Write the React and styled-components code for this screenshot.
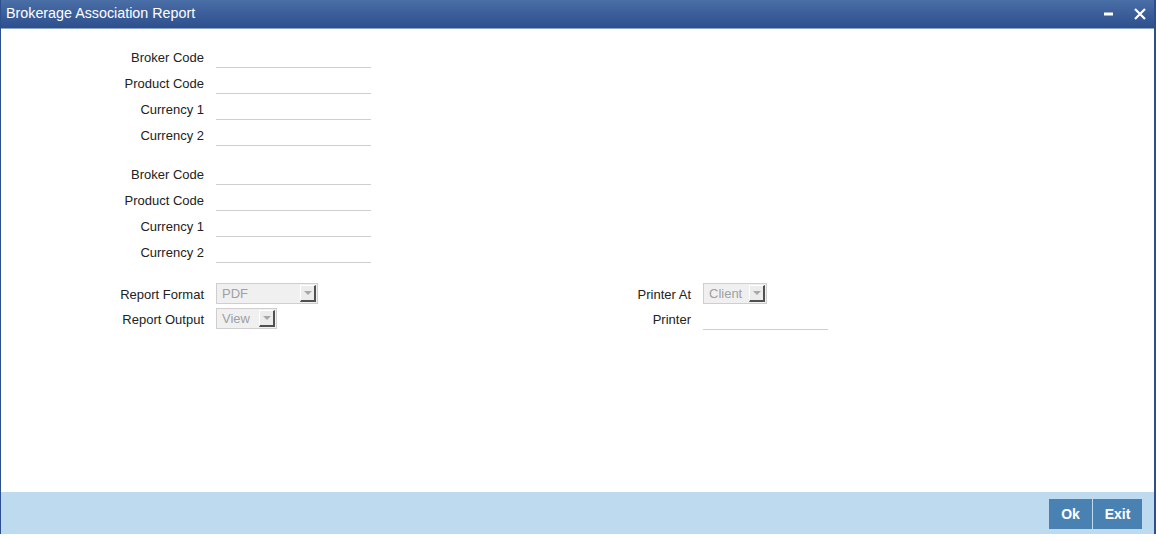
import React from 'react';
import styled, { createGlobalStyle } from 'styled-components';

const GlobalStyle = createGlobalStyle`
  html, body {
    margin: 0;
    padding: 0;
    background: #fff;
    font-family: "Liberation Sans", Arial, sans-serif;
  }
`;

const Window = styled.div`
  width: 1156px;
  height: 534px;
  box-sizing: border-box;
  border-left: 1px solid #2d4f8e;
  border-right: 2px solid #2d4f8e;
  display: flex;
  flex-direction: column;
  background: #fff;
`;

const TitleBar = styled.div`
  height: 28px;
  flex: none;
  display: flex;
  align-items: center;
  justify-content: space-between;
  padding: 0 8px 0 5px;
  background: linear-gradient(#4a6ea6, #2d4f8e);
  border-bottom: 1px solid #8ea7c7;
  color: #fff;
  font-size: 14.3px;
`;

const Title = styled.span`
  margin-top: -2px;
`;

const WindowControls = styled.div`
  display: flex;
  align-items: center;
  gap: 20px;
`;

const Body = styled.div`
  flex: 1;
  padding-top: 13px;
  display: flex;
  flex-direction: column;
`;

const Group = styled.div`
  display: flex;
  flex-direction: column;
  row-gap: ${(p) => p.$rowGap || 0}px;
  margin-bottom: ${(p) => p.$gap || 0}px;
`;

const Row = styled.div`
  display: grid;
  grid-template-columns: ${(p) => p.$labelWidth || 203}px auto;
  column-gap: 12px;
  height: ${(p) => p.$height || 26}px;
  align-items: ${(p) => p.$align || 'end'};
`;

const Label = styled.label`
  text-align: right;
  font-size: 13px;
  color: #222;
  align-self: center;
  padding-top: ${(p) => p.$pad ?? 4}px;
`;

const TextInput = styled.div`
  width: ${(p) => p.$width || 155}px;
  height: ${(p) => p.$height || 26}px;
  box-sizing: border-box;
  border-bottom: 1px solid #cfcfcf;
`;

const Columns = styled.div`
  display: grid;
  grid-template-columns: 559px auto;
  margin-top: 20px;
`;

const Select = styled.div`
  width: ${(p) => p.$width}px;
  height: 21px;
  box-sizing: border-box;
  border: 1px solid #cfcfcf;
  background: #f0f0f0;
  display: flex;
  align-items: center;
  justify-content: space-between;
  padding: 0 1px 0 5px;
  color: #a0a0a0;
  font-size: 13px;
`;

const Arrow = styled.span`
  width: 16px;
  height: 17px;
  box-sizing: border-box;
  border-top: 1px solid #fff;
  border-left: 1px solid #fff;
  border-right: 2px solid #505050;
  border-bottom: 2px solid #505050;
  background: #ececec;
  display: flex;
  align-items: center;
  justify-content: center;

  &::after {
    content: '';
    border-left: 4px solid transparent;
    border-right: 4px solid transparent;
    border-top: 4px solid #a8a8a8;
  }
`;

const Footer = styled.div`
  height: 42px;
  flex: none;
  background: #bddaee;
  display: flex;
  justify-content: flex-end;
  align-items: center;
  gap: 1px;
  padding-right: 12px;
`;

const Button = styled.button`
  height: 30px;
  width: ${(p) => p.$width}px;
  border: none;
  background: #4a81b3;
  color: #fff;
  font-family: "Liberation Sans", Arial, sans-serif;
  font-weight: bold;
  font-size: 14px;
  padding: 0;
  margin-top: 2px;
`;

const fields = ['Broker Code', 'Product Code', 'Currency 1', 'Currency 2'];

const Dropdown = ({ value, width }) => (
  <Select $width={width}>
    <span>{value}</span>
    <Arrow />
  </Select>
);

const App = () => (
  <>
    <GlobalStyle />
    <Window>
      <TitleBar>
        <Title>Brokerage Association Report</Title>
        <WindowControls>
          <svg width="10" height="4" viewBox="0 0 10 4">
            <rect x="0" y="0.5" width="9" height="3" fill="#fff" />
          </svg>
          <svg width="12" height="12" viewBox="0 0 12 12">
            <path d="M1 1 L11 11 M11 1 L1 11" stroke="#fff" strokeWidth="2.2" />
          </svg>
        </WindowControls>
      </TitleBar>
      <Body>
        <Group $gap={13}>
          {fields.map((f) => (
            <Row key={f}>
              <Label>{f}</Label>
              <TextInput />
            </Row>
          ))}
        </Group>
        <Group>
          {fields.map((f) => (
            <Row key={f}>
              <Label>{f}</Label>
              <TextInput />
            </Row>
          ))}
        </Group>
        <Columns>
          <Group $rowGap={4}>
            <Row $height={21} $align="center">
              <Label $pad={1}>Report Format</Label>
              <Dropdown value="PDF" width={102} />
            </Row>
            <Row $height={21} $align="center">
              <Label $pad={1}>Report Output</Label>
              <Dropdown value="View" width={61} />
            </Row>
          </Group>
          <Group $rowGap={4}>
            <Row $height={21} $align="center" $labelWidth={131}>
              <Label $pad={1}>Printer At</Label>
              <Dropdown value="Client" width={64} />
            </Row>
            <Row $height={22} $align="end" $labelWidth={131}>
              <Label $pad={0}>Printer</Label>
              <TextInput $width={125} $height={22} />
            </Row>
          </Group>
        </Columns>
      </Body>
      <Footer>
        <Button $width={43}>Ok</Button>
        <Button $width={49}>Exit</Button>
      </Footer>
    </Window>
  </>
);

export default App;
